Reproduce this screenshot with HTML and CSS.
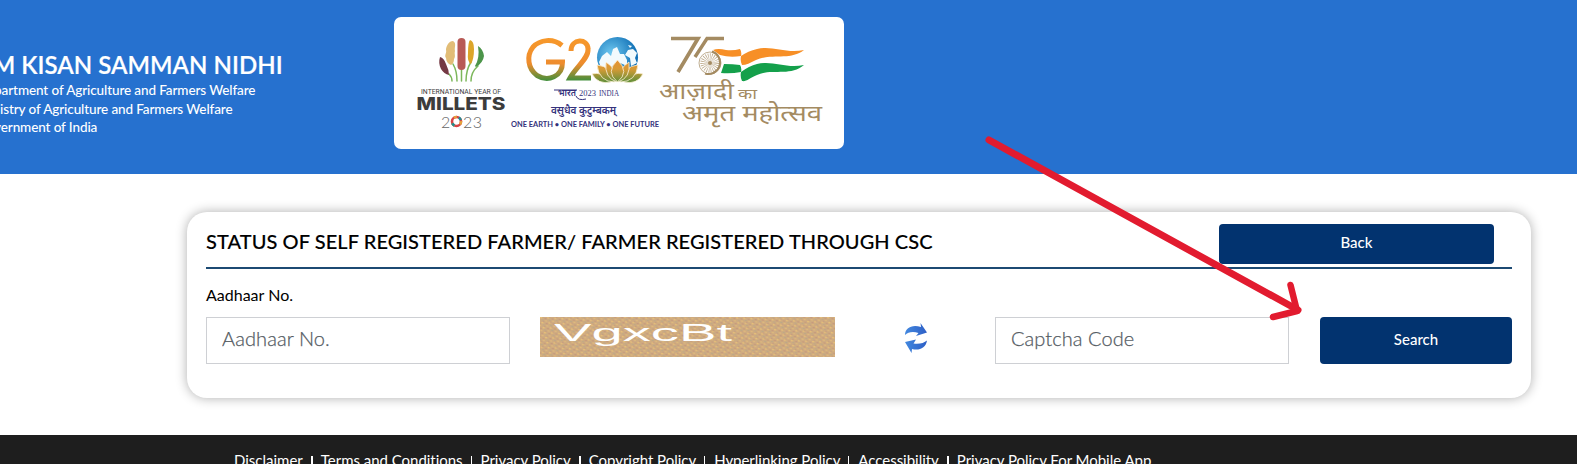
FILE: index.html
```html
<!DOCTYPE html>
<html lang="en">
<head>
<meta charset="utf-8">
<title>PM Kisan Samman Nidhi</title>
<link rel="stylesheet" href="styles.css">
</head>
<body>
<div class="page">
  <header class="header">
    <div class="brand">
      <h1 class="brand-title">PM KISAN SAMMAN NIDHI</h1>
      <p class="brand-line">Department of Agriculture and Farmers Welfare</p>
      <p class="brand-line">Ministry of Agriculture and Farmers Welfare</p>
      <p class="brand-line">Government of India</p>
    </div>
    <div class="logos">
      <svg class="logo-art" viewBox="394 17 450 132" width="450" height="132">
        <defs>
          <linearGradient id="g20" x1="0" y1="38" x2="0" y2="81" gradientUnits="userSpaceOnUse"><stop offset="0" stop-color="#f7992b"/><stop offset=".6" stop-color="#ee8c2d"/><stop offset="1" stop-color="#3f8f3c"/></linearGradient>
          <radialGradient id="globe" cx=".35" cy=".4" r=".7"><stop offset="0" stop-color="#6fc8f0"/><stop offset="1" stop-color="#0565ae"/></radialGradient>
          <linearGradient id="lotus" x1="0" y1="55" x2="0" y2="83" gradientUnits="userSpaceOnUse"><stop offset="0" stop-color="#ef8d2f"/><stop offset=".5" stop-color="#d79a35"/><stop offset="1" stop-color="#598f3b"/></linearGradient>
        </defs>
        <!-- Year of Millets -->
        <g fill="none" stroke="#7cb75b" stroke-width="1.5" stroke-linecap="round">
          <path d="M461.500 68V81M453 64Q457 71 457 81M471 62Q466 70 466 81M449 74Q452 77 452 81M478 66Q471 72 471 81"/>
        </g>
        <rect x="457.500" y="38" width="8" height="32" rx="4" fill="#b85a56"/>
        <path d="M470 40Q474 41 474 49Q474 59 471 64Q467 62 468 53Q468 42 470 40Z" fill="#dca62a"/>
        <path d="M453 41C457 43 454 48 455 51C454 54 456 56 454 59C454 62 453 64 451 65C448 64 446 61 446 58C444 55 447 53 446 50C446 46 449 41 453 41Z" fill="#e2bd77"/>
        <path d="M440 57Q444 58 446 64Q449 70 449 75Q444 74 441 69Q438 63 440 57Z" fill="#743944"/>
        <path d="M478 46Q483 49 484 56Q483 63 476 67L475 66Q480 58 478 46Z" fill="#4c954a"/>
        <g fill="#3c3c3c">
          <text x="421" y="93.500" font-size="7.300" font-family="Roboto, sans-serif" textLength="80" lengthAdjust="spacingAndGlyphs">INTERNATIONAL YEAR OF</text>
          <text x="416.500" y="110" font-size="17" font-weight="800" font-family="Inter, sans-serif" textLength="89" lengthAdjust="spacingAndGlyphs">MILLETS</text>
        </g>
        <g fill="#666" font-family="Lato, sans-serif" font-weight="300" font-size="16">
          <text x="441" y="127.500">2</text><text x="463" y="127.500" textLength="19">23</text>
        </g>
        <circle cx="456.500" cy="121.500" r="4.500" fill="none" stroke="#d74345" stroke-width="2.600"/>
        <circle cx="456.500" cy="121.500" r="4.500" fill="none" stroke="#e5a13b" stroke-width="2.600" stroke-dasharray="3 6"/>
        <circle cx="456.500" cy="121.500" r="4.500" fill="none" stroke="#238a93" stroke-width="2.600" stroke-dasharray="3 11" stroke-dashoffset="5"/>
        <!-- G20 -->
        <g fill="none" stroke="url(#g20)" stroke-width="5">
          <path d="M562 45.500C553 38 540 39.500 533 47C526 56 528 69 537 75.500C548 82 562.500 77 562.500 62H546"/>
          <path d="M571 51C571 38 588 38 588 49C589 58 576 67 570 78H591"/>
        </g>
        <circle cx="617.500" cy="57.500" r="20.500" fill="url(#globe)"/>
        <path d="M599 62L602 56L607 52L611 56L613 49L617 47L620 54L624 54L627 60L627 66L618 62L610 68L601 68ZM625 55L628 50L633 49L637 53L635 58L637 63L631 66L630 58ZM628 45L632 46L630 48Z" fill="#f2fafd"/>
        <g fill="url(#lotus)" stroke="#fff2d9" stroke-width=".8">
          <path d="M592 74Q602 71 611 82Q598 85 592 74ZM643 74Q633 71 624 82Q637 85 643 74Z"/>
          <path d="M597 65Q611 66 615 82Q599 82 597 65ZM638 65Q624 66 620 82Q636 82 638 65Z"/>
          <path d="M606 62Q617 69 617 82Q604 78 606 62ZM629 62Q618 69 618 82Q631 78 629 62Z"/>
          <path d="M617.500 60Q630 72 617.500 82Q605 72 617.500 60Z"/>
        </g>
        <g fill="#34327c">
          <text x="558" y="96" font-size="9" font-family="'Noto Sans Devanagari', 'Noto Sans', sans-serif" textLength="18" lengthAdjust="spacingAndGlyphs" font-weight="600">भारत</text>
          <text x="579" y="96" font-size="7.500" font-family="'Liberation Serif', serif" textLength="17" lengthAdjust="spacingAndGlyphs">2023</text>
          <text x="599" y="95.500" font-size="7.500" font-family="'Liberation Serif', serif" textLength="20" lengthAdjust="spacingAndGlyphs">INDIA</text>
          <text x="551" y="114" font-size="10.500" font-family="'Noto Sans Devanagari', 'Noto Sans', sans-serif" textLength="65" lengthAdjust="spacingAndGlyphs" font-weight="600">वसुधैव कुटुम्बकम्</text>
          <text x="511" y="127" font-size="6.500" font-weight="700" font-family="Lato, sans-serif" textLength="148" lengthAdjust="spacingAndGlyphs">ONE EARTH • ONE FAMILY • ONE FUTURE</text>
        </g>
        <path d="M554 90H577M576 96Q578 101 586 99" fill="none" stroke="#34327c" stroke-width="1"/>
        <!-- Azadi ka Amrit Mahotsav -->
        <path d="M713 50Q718 48 726 50Q733 51 740 49Q742 52 741 56Q748 51 757 49C772 45 786 54 804 50C790 61 771 53 756 60C750 63 746 65 742 65Q740 61 741 56Q730 58 720 55Z" fill="#f78f26"/>
        <path d="M724 64Q733 64 740 65Q742 68 741 72Q749 66 757 64C773 60 786 69 804 65C790 77 771 68 757 75C750 78 746 82 742 81Q740 77 741 72Q731 74 721 73Z" fill="#14a04b"/>
        <g fill="none" stroke="#a48b62">
          <path d="M671 38.500H698L678 72" stroke-width="3.700"/>
          <path d="M724 38.500H707L695 57" stroke-width="3.400"/>
          <path d="M712 51.500A11.500 11.500 0 0 1 705 73.500" stroke-width="2"/>
          <circle cx="710" cy="63" r="11" stroke-width=".7"/>
          <circle cx="710" cy="63" r="5.200" stroke-width="9" stroke-dasharray=".5 .9" opacity=".75"/>
        </g>
        <circle cx="710" cy="63" r="2" fill="#a48b62"/>
        <g fill="#a48b62" font-family="'Noto Sans Devanagari', 'Noto Sans', sans-serif">
          <text x="659" y="99" font-size="23" textLength="75" lengthAdjust="spacingAndGlyphs">आज़ादी</text>
          <text x="738" y="99" font-size="14" textLength="19" lengthAdjust="spacingAndGlyphs">का</text>
          <text x="682" y="121" font-size="22" textLength="140" lengthAdjust="spacingAndGlyphs">अमृत महोत्सव</text>
        </g>
      </svg>
    </div>
  </header>

  <main class="card">
    <div class="card-head">
      <h2 class="card-title">STATUS OF SELF REGISTERED FARMER/ FARMER REGISTERED THROUGH CSC</h2>
      <button class="btn btn-back">Back</button>
    </div>
    <label class="label" for="aadhaar">Aadhaar No.</label>
    <div class="form-row">
      <input class="field field-aadhaar" id="aadhaar" placeholder="Aadhaar No.">
      <svg class="captcha" width="295" height="40" viewBox="0 0 295 40">
        <defs>
          <pattern id="weave" width="7" height="5" patternUnits="userSpaceOnUse" patternTransform="skewX(14) skewY(3)">
            <rect width="7" height="5" fill="#cfab80"/>
            <rect width="2" height="1.300" fill="#e6bf78"/>
            <rect x="4" y="1" width="2" height="1" fill="#c4967c"/>
            <rect x="1" y="2.300" width="2" height="1" fill="#bba987"/>
            <rect x="4" y="3" width="2" height="1.300" fill="#e0ba7c"/>
            <rect x="2" y="4" width="1" height="1" fill="#c6987e"/>
          </pattern>
        </defs>
        <rect width="295" height="40" fill="url(#weave)"/>
        <text x="14" y="24" font-family="'Liberation Sans', sans-serif" font-size="23.500" fill="#fff" textLength="178" lengthAdjust="spacingAndGlyphs">VgxcBt</text>
      </svg>
      <svg class="refresh" width="24" height="32" viewBox="0 0 24 32">
        <defs><linearGradient id="blue" x1="0" y1="0" x2="1" y2="0"><stop offset="0" stop-color="#4288df"/><stop offset="1" stop-color="#2e5fc6"/></linearGradient></defs>
        <path d="M1 13C1 6 8 2 17 5L16.500 1L23 10.500L12 14L14.500 11C9 9 4 10 1 13Z" fill="url(#blue)"/>
        <path d="M23 18.500C22 26 15 29 8 27L7.500 31L1 20L12 17.500L9.500 21.500C15 22.500 20 21 23 18.500Z" fill="url(#blue)"/>
      </svg>
      <input class="field field-code" placeholder="Captcha Code">
      <button class="btn btn-search">Search</button>
    </div>
  </main>

  <footer class="footer">
    <a class="link">Disclaimer</a><i class="sep bold"></i>
    <a class="link">Terms and Conditions</a><i class="sep"></i>
    <a class="link">Privacy Policy</a><i class="sep bold"></i>
    <a class="link">Copyright Policy</a><i class="sep"></i>
    <a class="link">Hyperlinking Policy</a><i class="sep"></i>
    <a class="link">Accessibility</a><i class="sep bold"></i>
    <a class="link">Privacy Policy For Mobile App</a>
  </footer>

  <svg class="arrow" width="330" height="200" viewBox="980 130 330 200">
    <path d="M989 140Q1110 207 1298 310" stroke-width="7"/>
    <path d="M1290.500 285L1297 311L1273 317" stroke-width="6.500"/>
  </svg>
</div>
</body>
</html>
```
FILE: styles.css
```css
* { box-sizing: border-box; }
body { margin: 0; background: #fff; overflow: hidden; font-family: Lato, "Noto Sans", sans-serif; color: #000; }
.page { position: relative; height: 464px; overflow: hidden; display: flex; flex-direction: column; }

.header { flex: none; height: 174px; background: #2671cf; display: flex; align-items: flex-start; }
.brand { width: 417px; margin-left: -23px; padding-top: 49px; color: #fff; white-space: nowrap; flex: none; }
.brand-title { margin: 0 0 0 1px; font-size: 24px; line-height: 32px; font-weight: 600; letter-spacing: .04px; -webkit-text-stroke: .2px #fff; }
.brand-line { margin: 0; font-size: 13.5px; line-height: 18.5px; font-weight: 500; letter-spacing: -.1px; }
.logos { width: 450px; height: 132px; margin-top: 17px; background: #fff; border-radius: 7px; flex: none; overflow: hidden; }
.logo-art { display: block; }

.card { flex: none; width: 1344px; height: 186px; margin: 38px 0 0 187px; padding: 12px 19px 0; border-radius: 20px; background: #fff; box-shadow: 0 0 12px rgba(0, 0, 0, .32); }
.card-head { display: flex; justify-content: space-between; align-items: flex-start; height: 45px; padding-right: 18px; border-bottom: 2px solid #1c4a73; }
.card-title { margin: 2px 0 0; font-size: 20px; line-height: 30px; font-weight: 500; letter-spacing: .07px; white-space: nowrap; -webkit-text-stroke: .12px #000; }
.btn { border: 0; border-radius: 4px; padding: 0 0 4px; background: #02336f; color: #fff; font: 500 15px/20px Lato, sans-serif; }
.btn-back { width: 275px; height: 40px; }
.label { display: block; height: 48px; padding-top: 14px; font-size: 16px; line-height: 24px; }
.form-row { display: flex; align-items: flex-start; }
.field { height: 47px; border: 1px solid #ced0d4; padding: 0 15px 5px; font: 300 20px/28px Lato, sans-serif; letter-spacing: .08px; background: #fff; border-radius: 0; }
.field::placeholder { color: #555c63; opacity: 1; -webkit-text-stroke: .25px #555c63; }
.field-aadhaar { width: 304px; }
.captcha { margin-left: 30px; }
.refresh { margin: 5px 0 0 69px; }
.field-code { width: 294px; margin-left: 67px; }
.btn-search { width: 192px; height: 47px; margin-left: 31px; padding-bottom: 3px; }

.footer { flex: none; height: 60px; margin-top: 37px; padding: 15px 0 0 234px; background: #1e1e1e; color: #fff; display: flex; align-items: flex-start; }
.link { font-size: 15px; line-height: 20px; white-space: nowrap; }
.sep { width: 1px; height: 14px; margin: 6px 9px 0 8px; background: #fff; }
.sep.bold { width: 2px; margin-right: 8px; }
.link:nth-of-type(n+2) { letter-spacing: -.025px; }

.arrow { position: absolute; left: 980px; top: 130px; fill: none; stroke: #e21b2f; stroke-linecap: round; stroke-linejoin: round; pointer-events: none; }
```
